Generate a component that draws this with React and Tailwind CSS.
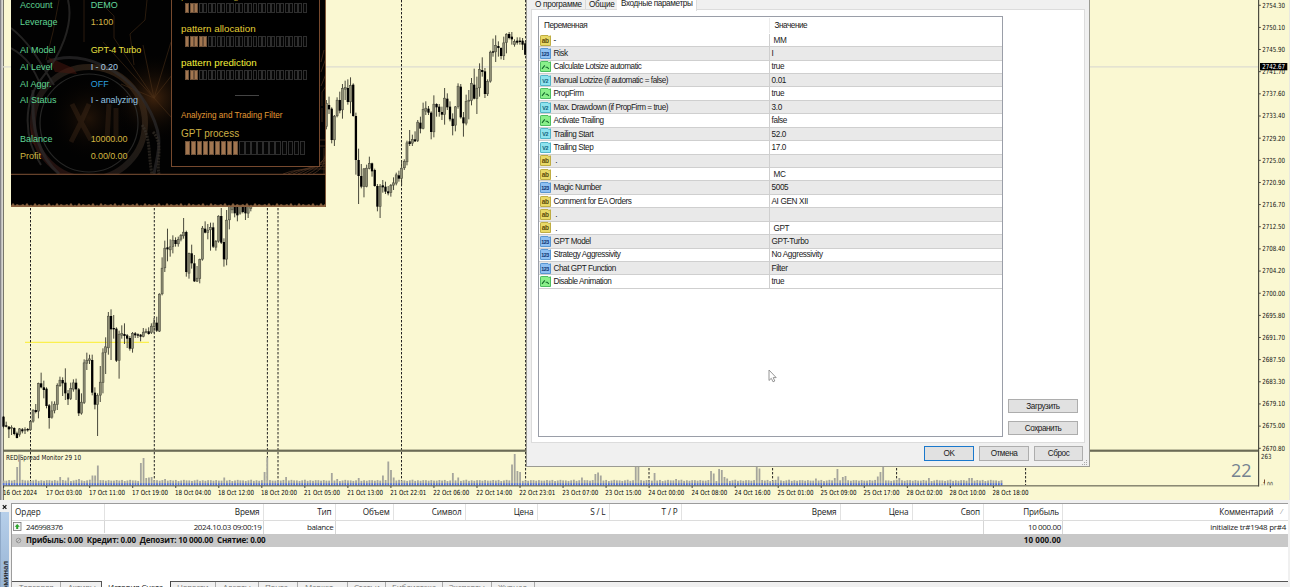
import React from "react";

/* Candles: high, low, body top, body bottom, direction (1 = up). Units are thirds of a pixel. */
const MORNING = [
  [648,685,650,680,0],[665,682,676,680,0],[678,714,680,688,0],[676,705,682,686,1],[682,706,684,702,0],[695,715,700,714,0],
  [684,710,686,704,1],[684,700,688,694,0],[682,702,688,692,1],[684,695,687,691,0],[662,692,664,690,1],[628,668,630,664,1],
  [612,640,630,636,0],[548,655,550,634,1],[518,565,550,562,0],[542,595,562,570,0],[562,625,566,618,0],[612,686,616,654,0],
  [604,656,632,652,1],[604,640,612,632,1],[550,630,556,614,1],[530,560,540,558,1],[532,588,540,550,0],[505,600,548,580,0],
  [570,615,580,598,0],[548,600,565,596,1],[538,575,548,568,1],[536,600,548,568,0],[564,648,568,640,0],[580,644,606,640,1],
  [478,612,488,608,1],[458,510,480,490,1],[464,492,476,482,1],[464,586,480,578,0],[562,628,578,614,0],[580,708,586,614,1],
  [498,606,546,586,1],[445,580,458,548,1],[412,522,440,458,1],[336,464,348,444,1],[328,480,348,388,0],[345,416,384,388,0],
  [382,486,386,482,0],[392,536,402,482,1],[376,416,400,406,1],[370,432,402,408,0],[402,444,406,416,0],[408,452,414,446,0],
  [396,458,400,446,1],[396,414,400,406,0],[400,414,403,407,0],[402,424,404,410,0],[384,412,396,410,1],[386,400,394,398,1],
  [382,404,394,402,0],[370,402,378,398,1],[354,400,368,380,1],[350,396,368,392,0],[280,396,282,394,1],[172,286,204,282,1],
  [122,216,144,204,1],[86,184,142,148,0],[118,170,140,150,1],[106,160,120,140,1],[112,140,120,132,0],[110,140,118,132,1],
  [102,124,106,118,1],[54,116,96,108,1],[92,230,96,216,0],[158,236,160,220,1],[134,206,160,190,0],[165,246,190,244,0],
  [198,246,234,244,1],[176,250,178,236,1],[78,182,84,178,1],[64,100,86,98,0],[72,118,90,98,1],[68,152,82,90,1],
  [68,144,82,140,0],[120,152,124,142,1],[46,128,48,124,1],[24,132,48,128,0],[115,200,126,178,0],[30,196,60,178,1],
  [10,88,10,60,1],[10,40,10,30,1],[10,52,10,40,0],[10,64,10,46,0],[10,44,10,40,1],[10,40,10,36,0],[10,60,10,40,0],
  [10,54,10,40,1],[10,34,10,26,1],
];
const EVENING = [
  [300,388,310,380,1],[290,342,315,328,0],[322,430,326,420,0],[345,438,348,420,1],[292,352,300,348,1],[275,340,300,332,0],
  [252,356,265,330,1],[242,300,262,268,1],[238,314,264,306,0],[232,340,256,306,1],[250,350,254,348,0],[338,524,348,480,0],
  [446,612,480,528,0],[492,565,528,560,0],[504,592,506,560,1],[494,562,504,560,1],[470,508,490,506,1],[488,530,490,514,0],
  [506,560,510,558,0],[552,634,558,620,0],[552,654,558,620,1],[540,578,556,562,0],[545,582,560,575,0],[558,586,574,580,0],
  [552,590,556,578,1],[532,570,548,556,1],[518,556,524,550,1],[512,545,526,536,0],[480,556,504,536,1],[478,510,484,504,1],
  [422,496,428,486,1],[390,438,424,432,0],[404,438,418,430,1],[394,426,418,424,0],[360,426,366,422,1],[350,400,368,386,0],
  [308,388,328,386,1],[304,345,324,334,1],[318,345,326,338,0],[334,418,338,396,0],[286,412,312,396,1],[310,350,312,322,0],
  [312,350,320,336,0],[320,360,336,344,0],[264,374,294,344,1],[280,330,296,322,0],[304,364,320,358,0],[340,406,356,378,0],
  [318,394,320,376,1],[250,326,258,320,1],[252,356,260,352,0],[336,410,352,370,0],[284,376,304,370,1],[270,358,300,304,1],
  [234,316,250,302,1],[206,298,254,296,0],[230,342,264,296,1],[190,290,208,264,1],[172,230,210,216,0],[204,294,214,282,0],
  [238,288,244,282,1],[152,248,156,244,1],[116,170,154,158,0],[106,186,136,156,1],[124,170,138,144,0],[142,178,144,168,0],
  [110,180,128,168,1],[100,160,102,128,1],[96,118,102,114,0],[96,134,110,118,0],[118,140,124,134,1],[112,134,122,128,0],
  [112,134,122,126,0],[114,150,122,134,0],[124,166,130,164,0],
];

/* Spread spikes: bar index -> top y */
const SPIKES = {
  5: 467, 6: 454.5, 21: 477, 24: 477.5, 28: 479, 33: 475.5, 34: 475.5, 35: 465.5, 51: 463, 52: 458, 53: 478, 54: 477.5, 55: 477,
  60: 479, 82: 477.5, 97: 472, 98: 457.5, 105: 477, 122: 473, 124: 479, 132: 478, 141: 475.5, 143: 461.5, 144: 470, 145: 477.5, 167: 473, 169: 477.5,
  189: 464.5, 190: 454, 191: 471, 192: 472, 215: 477.5, 220: 474, 221: 472.5, 222: 475.5, 235: 460, 236: 460, 242: 473, 250: 479,
  263: 471, 264: 473.5, 266: 469, 267: 470, 268: 477, 269: 478.5, 280: 466, 281: 468.5, 288: 476.5, 302: 478.5, 309: 478, 310: 469, 312: 477, 313: 476,
  325: 476.5, 326: 472, 327: 466, 333: 478, 344: 478, 359: 478, 360: 478,
};
const TIMES = ["16 Oct 2024","17 Oct 03:00","17 Oct 11:00","17 Oct 19:00","18 Oct 04:00","18 Oct 12:00","18 Oct 20:00","21 Oct 05:00","21 Oct 13:00","21 Oct 22:01","22 Oct 06:00","22 Oct 14:00","22 Oct 23:01","23 Oct 07:00","23 Oct 15:00","24 Oct 00:00","24 Oct 08:00","24 Oct 16:00","25 Oct 01:00","25 Oct 09:00","25 Oct 17:00","28 Oct 02:00","28 Oct 10:00","28 Oct 18:00"];
const PRICES = ["2754.30","2750.10","2745.90","2741.70","2737.60","2733.40","2729.20","2725.00","2720.90","2716.70","2712.50","2708.40","2704.20","2700.00","2695.80","2691.70","2687.50","2683.30","2679.10","2675.00","2670.80"];

const PARAMS = [
  ["ab", "-", "\u00a0MM"], ["int", "Risk", "I"], ["bool", "Calculate Lotsize automatic", "true"],
  ["dbl", "Manual Lotzize (if automatic = false)", "0.01"], ["bool", "PropFirm", "true"],
  ["dbl", "Max. Drawdown (if PropFirm = true)", "3.0"], ["bool", "Activate Trailing", "false"],
  ["dbl", "Trailing Start", "52.0"], ["dbl", "Trailing Step", "17.0"], ["ab", "\u00a0.", ""], ["ab", "\u00a0.", "\u00a0MC"],
  ["int", "Magic Number", "5005"], ["ab", "Comment for EA Orders", "AI GEN XII"], ["ab", "\u00a0.", ""], ["ab", "\u00a0.", "\u00a0GPT"],
  ["int", "GPT Model", "GPT-Turbo"], ["int", "Strategy Aggressivity", "No Aggressivity"],
  ["int", "Chat GPT Function", "Filter"], ["bool", "Disable Animation", "true"],
];

function Candles({ data, x0, y0 }) {
  return data.map(([h, l, t, b, up], i) => {
    const x = (x0 + i * 8.065) / 3;
    const top = (y0 + t) / 3;
    const hgt = Math.max((b - t) / 3, 1);
    return (
      <g key={i}>
        <line x1={x} x2={x} y1={(y0 + h) / 3} y2={(y0 + l) / 3} stroke="#34342a" strokeWidth="0.9" />
        {up ? (
          <rect x={x - 1} y={top + 0.2} width="2" height={Math.max(hgt - 0.4, 0.6)} fill="#8f8f76" stroke="#4c4c3e" strokeWidth="0.6" />
        ) : (
          <rect x={x - 1.15} y={top} width="2.3" height={hgt} fill="#000" />
        )}
      </g>
    );
  });
}

function Chart() {
  const bars = Array.from({ length: 372 }, (_, i) => i);
  return (
    <svg width="1290" height="500" className="block" fontFamily="'DejaVu Sans Condensed','DejaVu Sans',sans-serif">
      <rect width="1290" height="500" fill="#faf8d2" />
      <rect width="3" height="500" fill="#d6d6d0" />
      <rect width="1.3" height="500" fill="#85858a" />
      <rect x="3" width="1" height="500" fill="#77776a" />
      <line x1="3" x2="1258" y1="66.8" y2="66.8" stroke="#dcdcd0" strokeWidth="1.2" />
      <line x1="25" x2="149" y1="342.3" y2="342.3" stroke="#fbf04e" strokeWidth="1.2" />
      <g stroke="#222" strokeWidth="1" strokeDasharray="2.4 1.6">
        {[30.5, 154.3, 267.4, 278, 401.5, 525.6, 649, 772.6, 896.6, 1025.6].map((x) => (
          <line key={x} x1={x} x2={x} y1="0" y2="485" />
        ))}
      </g>
      <Candles data={MORNING} x0={10.5} y0={600} />
      <Candles data={EVENING} x0={979} y0={0} />

      <rect x="3" y="449.6" width="1256" height="2.2" fill="#6b6b56" />
      <text x="6" y="460.2" fontSize="7" textLength="75" lengthAdjust="spacingAndGlyphs" fill="#111">RED|Spread Monitor 29 10</text>
      {bars.map((i) => {
        const x = 3.7 + i * 2.6895;
        const top = SPIKES[i] ?? 480.6 - ((i * 7) % 5) * 0.22 + ((i * 3) % 4) * 0.15;
        return (
          <g key={i}>
            <rect x={x - 0.9} y={top} width="1.8" height={483.6 - top} fill="#a5a59c" />
            <rect x={x - 0.9} y="483.2" width="1.8" height="2.3" fill="#4a6be0" />
          </g>
        );
      })}
      <rect x="3" y="485.3" width="1256" height="1.1" fill="#5c5c4c" />
      <rect x="1258" y="0" width="1.2" height="486.4" fill="#4c4c40" />
      {TIMES.map((t, i) => (
        <g key={t}>
          <rect x={3.2 + i * 43.03} y="486" width="0.9" height="2" fill="#333" />
          <text x={2.9 + i * 43.03} y="494.5" fontSize="7" textLength={i ? 36 : 34} lengthAdjust="spacingAndGlyphs" fill="#000">{t}</text>
        </g>
      ))}
      {PRICES.map((p, i) => (
        <g key={p}>
          <rect x="1259" y={4.8 + i * 22.15} width="1.8" height="0.9" fill="#333" />
          <text x="1262.3" y={7.6 + i * 22.15} fontSize="7" textLength="22.8" lengthAdjust="spacingAndGlyphs" fill="#111">{p}</text>
        </g>
      ))}
      <rect x="1260" y="63" width="27.3" height="7.3" fill="#000" />
      <text x="1262.3" y="69.3" fontSize="7" textLength="22.8" lengthAdjust="spacingAndGlyphs" fill="#fff">2742.67</text>
      <text x="1261" y="459" fontSize="7" textLength="10.5" lengthAdjust="spacingAndGlyphs" fill="#222">263</text>
      <svg x="1259" y="476" width="30" height="9.2">
        <text x="2" y="10.5" fontSize="7" textLength="12" lengthAdjust="spacingAndGlyphs" fill="#333">-1.00</text>
        <path d="M5.5 3.5V7.5" stroke="#7a4a30" strokeWidth="1" />
      </svg>
      <text x="1231" y="476.5" fontSize="19" fontFamily="'Open Sans','Noto Sans',sans-serif" textLength="20.5" lengthAdjust="spacingAndGlyphs" fill="#748290">22</text>
      <rect x="1289" width="1" height="500" fill="#e8e8e0" />
    </svg>
  );
}

function Meter({ total, filled, big }) {
  return (
    <div className={big ? "ml-[3.5px] flex h-[14px] w-[120.5px] gap-[0.6px]" : "ml-1 flex h-[10.5px] w-[122px] gap-[0.5px]"}>
      {Array.from({ length: total }, (_, i) => (
        <div key={i} className={i < filled ? "flex-1 border border-[#6f523a] bg-[#a27650]" : "flex-1 border border-[#2e2e2e] bg-[#050505]"} />
      ))}
    </div>
  );
}

function InfoRow({ label, value, tone, labelTone = "text-[#5fd693]" }) {
  return (
    <div className="flex h-[16.8px] items-center">
      <span className={`w-[70.7px] ${labelTone}`}>{label}</span>
      <span className={tone}>{value}</span>
    </div>
  );
}

function PanelArt() {
  return (
    <svg width="315" height="207" className="absolute left-0 top-0">
      <defs>
        <radialGradient id="glow"><stop offset="0" stopColor="#5e3413" stopOpacity=".65" /><stop offset="1" stopColor="#000" stopOpacity="0" /></radialGradient>
        <linearGradient id="ring" x1="0" y1="1" x2="1" y2="0"><stop offset="0" stopColor="#3a1512" /><stop offset=".5" stopColor="#2b2622" /><stop offset="1" stopColor="#4b3018" /></linearGradient>
      </defs>
      <rect width="315" height="207" fill="#020202" />
      <ellipse cx="78" cy="118" rx="42" ry="44" fill="url(#glow)" opacity=".5" />
      <circle cx="143" cy="98" r="46" fill="url(#glow)" />
      <g stroke="#50331a" strokeWidth=".7" opacity=".75" fill="none">
        <path d="M143 98L160 42M143 98L132 45M143 98L112 52M143 98L92 42M143 98L161 75M143 98L161 118M143 98L110 84" />
        <path d="M94 0V7L103 16V38L111 50M136 0L134 20L119 34L123 65M73 42V0M48 0L42 32L35 60" />
      </g>
      <circle cx="78" cy="123" r="56" fill="none" stroke="url(#ring)" strokeWidth="6" opacity=".65" />
      <circle cx="78" cy="123" r="49" fill="none" stroke="#30302e" strokeWidth="1.2" opacity=".8" />
      <path d="M36 62C70 48 115 70 135 104S147 150 143 174M22 90C20 130 28 156 48 174" fill="none" stroke="#2c2b2c" strokeWidth="3" opacity=".7" />
      <path d="M37 57L62 68L66 74L44 72ZM19 123L25 146L21 143Z" fill="#46150f" opacity=".55" />
      <path d="M61 104L70 122L60 142M78 104L70 122L80 140M98 104L96 140M105 108V142" fill="none" stroke="#51351f" strokeWidth="5" opacity=".32" />
      <path d="M0 28C18 42 28 60 43 85M0 48C16 57 22 67 31 88M57 0C63 24 50 55 31 78S12 138 30 165" fill="none" stroke="#2c2a29" strokeWidth="2" opacity=".8" />
      <path d="M142 132C153 144 145 160 148 174M131 125C140 138 137 155 141 174" fill="none" stroke="#36302a" strokeWidth="3" strokeDasharray="2 1" opacity=".7" />
      <g fill="none" stroke="#49301f" strokeWidth=".8">
        <path d="M310 62L313 50M310 72L315 58M310 86L315 74M311 106V92L315 86M311 122V108M308 140H315M308 146H315M313 148V174" />
        {[0, 1, 2, 3, 4, 5, 6].map((i) => <path key={i} d={`M${272 + i * 5} 174Q${285 + i * 5} 168 315 ${169 - i * 3}`} />)}
      </g>
      <rect y="174.5" width="315" height="32.5" fill="#000" />
      <path d="M0 174.3H315" stroke="#805336" strokeWidth="1" />
      <path d={"M0 206" + Array.from({ length: 158 }, (_, i) => `L${i * 2} ${206 - ((i * i * 7 + i * 3) % 11) / 3.6}`).join("") + "V207H0Z"} fill="#8b6442" stroke="#8b6442" strokeWidth=".4" />
      <path d="M0 206.3H315M314.6 0V206" stroke="#8b603f" strokeWidth="1" />
    </svg>
  );
}

function TradePanel() {
  return (
    <section className="absolute left-[10.5px] top-0 h-[207px] w-[315px] overflow-hidden bg-black font-['Liberation_Sans',Arial,sans-serif] text-[9px]">
      <PanelArt />
      <div className="relative flex">
        <div className="w-[160px] pl-[9.5px]">
          <div className="-mt-[2.5px]">
            <InfoRow label="Account" value="DEMO" tone="text-[#63d59a]" />
            <InfoRow label="Leverage" value="1:100" tone="text-[#d6b548]" />
          </div>
          <div className="mt-[11.3px]">
            <InfoRow label="AI Model" value="GPT-4 Turbo" tone="text-[#e9e040] -tracking-[0.1px]" />
            <InfoRow label="AI Level" value="I - 0.20" tone="text-[#a6cbe0] -tracking-[0.1px]" />
            <InfoRow label="AI Aggr." value="OFF" tone="text-[#2c9ede]" />
            <InfoRow label="AI Status" value="I - analyzing" tone="text-[#94c5e4] -tracking-[0.1px]" />
          </div>
          <div className="mt-[22px]">
            <InfoRow label="Balance" value="10000.00" tone="text-[#d2b640] -tracking-[0.1px]" />
            <InfoRow label="Profit" value="0.00/0.00" tone="text-[#d2b640] -tracking-[0.1px]" labelTone="text-[#d2b640]" />
          </div>
        </div>
        <div className="h-[167px] w-[149px] overflow-hidden border border-t-0 border-[#76492e] bg-black pl-[9.5px] text-[9.8px] leading-[12px] text-[#e3cf35]">
          <div className="-mt-[9.8px] text-[#a99a2a]">pattern recognition</div>
          <div className="mt-[0.3px]"><Meter total={27} filled={3} /></div>
          <div className="mt-[10.1px]">pattern allocation</div>
          <div className="mt-[1px]"><Meter total={27} filled={5} /></div>
          <div className="mt-[10.1px] text-[#f4f03c]">pattern prediction</div>
          <div className="mt-[1px]"><Meter total={27} filled={3} /></div>
          <div className="ml-[54px] mt-[15px] h-px w-6 bg-[#444]" />
          <div className="mt-[13.5px] text-[8.2px] text-[#e39a35]">Analyzing and Trading Filter</div>
          <div className="mt-[6.3px] text-[10px] text-[#cdb045]">GPT process</div>
          <div className="mt-px"><Meter total={20} filled={9} big /></div>
        </div>
      </div>
    </section>
  );
}

function TypeIcon({ kind }) {
  const c = { ab: ["#e9d968", "#b9a637", "#5c4d0c"], int: ["#8fc0f2", "#4d8fce", "#0d3270"], bool: ["#8af08a", "#42b656", "#14682c"], dbl: ["#8fe3ee", "#46afc4", "#10607a"] }[kind];
  return (
    <svg width="11" height="11" viewBox="0 0 11 11" className="shrink-0">
      <path d="M.5 1.2Q.5.5 1.2.5H8L8.8 1.6L10.5 .8V10.5H.8Q.5 10.5 .5 10Z" fill={c[0]} stroke={c[1]} strokeWidth=".9" />
      {kind === "bool" ? (
        <path d="M2 7.8L4.8 4.4M5.6 6.2H7.2L8.8 7.8" stroke={c[2]} strokeWidth="1.1" fill="none" />
      ) : (
        <text x="5.1" y="7.9" textAnchor="middle" fontSize={kind === "ab" ? 6.5 : 5.4} fontWeight="bold" fontFamily="'Liberation Sans',sans-serif" fill={c[2]}>
          {kind === "ab" ? "ab" : kind === "int" ? "123" : "V2"}
        </text>
      )}
    </svg>
  );
}

function Button({ children, className = "" }) {
  return <button className={`flex items-center justify-center border bg-[#e1e1e1] ${className}`}>{children}</button>;
}

function Dialog() {
  return (
    <section className="absolute left-[526px] top-0 flex h-[467px] w-[564px] flex-col border border-t-0 border-[#9b9b93] bg-[#f0f0f0] font-['Liberation_Sans',Arial,sans-serif] text-[8.2px] leading-[10px] tracking-[-0.45px] text-[#1a1a1a]">
      <nav className="ml-1 flex h-[9px] shrink-0 overflow-visible whitespace-nowrap">
        <div className="h-[9px] w-[55px] border-r border-[#d9d9d9] pl-[4px] tracking-[-0.3px]">О программе</div>
        <div className="h-[9px] w-[31px] pl-[3px] tracking-[-0.3px]">Общие</div>
        <div className="z-10 h-[10.5px] w-[80px] border-r border-[#dcdcdc] bg-white pl-[4px] tracking-[-0.38px]"><div className="-mt-px">Входные параметры</div></div>
      </nav>
      <div className="ml-1 flex h-[434px] w-[554px] shrink-0 border border-[#dcdcdc] bg-white pl-[6px] pt-[6px]">
        <div className="flex h-[421px] w-[465px] flex-col border border-[#9a9ea8]">
          <div className="flex h-[16.8px] shrink-0 items-center pt-px">
            <span className="w-[230.5px] border-r border-[#ececec] pl-[5px] leading-[15px]">Переменная</span>
            <span className="pl-[5px]">Значение</span>
          </div>
          {PARAMS.map(([kind, name, value], i) => (
            <div key={i} className={`flex h-[13.43px] shrink-0 items-center border-b border-[#cfcfcf] ${i % 2 ? "bg-[#e9e9e9]" : "bg-white"}`}>
              <div className="flex h-full w-[230.5px] items-center gap-[3px] border-r border-[#cfcfcf] pl-[0.5px]">
                <TypeIcon kind={kind} />
                <span className="pt-[1.2px]">{name}</span>
              </div>
              <span className="pl-[2px] pt-[1.2px] tracking-[-0.35px]">{value}</span>
            </div>
          ))}
        </div>
        <div className="ml-[5px] mt-[383px] flex flex-col gap-[8px]">
          <Button className="h-[14px] w-[70px] border-[#adadad] pt-px">Загрузить</Button>
          <Button className="h-[14px] w-[70px] border-[#adadad] pt-px">Сохранить</Button>
        </div>
      </div>
      <div className="mr-[6px] mt-[3px] flex justify-end gap-[5px]">
        <Button className="h-[15px] w-[50px] border-[1.6px] border-[#1a78cc]">OK</Button>
        <Button className="h-[15px] w-[50px] border-[#adadad]">Отмена</Button>
        <Button className="h-[15px] w-[49px] border-[#adadad]">Сброс</Button>
      </div>
      <svg width="6" height="6" className="absolute bottom-0 right-px" fill="#aaa">
        <path d="M4 0h1v1h-1zM4 2h1v1h-1zM4 4h1v1h-1zM2 2h1v1h-1zM2 4h1v1h-1zM0 4h1v1h-1z" />
      </svg>
    </section>
  );
}

const COLS = "grid grid-cols-[92.5px_159px_72px_58px_72px_72px_72px_72px_159px_72px_71.5px_79px_225px]";
const HEADS = ["", "Время", "Тип", "Объем", "Символ", "Цена", "S / L", "T / P", "Время", "Цена", "Своп", "Прибыль"];
const CELLS = ["", "2024.10.03 09:00:19", "balance", "", "", "", "", "", "", "", "", "10 000.00"];
const RULED = [0, 1, 2, 10, 11];

function Tab({ children, className }) {
  return <div className={`relative h-[6px] shrink-0 whitespace-nowrap leading-[7px] ${className}`}>{children}</div>;
}

function Terminal() {
  return (
    <section className="flex h-[87px] bg-[#f0f0f0] font-['Open_Sans','Noto_Sans',sans-serif] text-[8px] tracking-[-0.1px] text-[#1a1a1a]">
      <aside className="flex w-[11px] shrink-0 flex-col pt-1">
        <svg width="10" height="7" className="shrink-0"><path d="M2.8 1.2L6.4 4.8M6.4 1.2L2.8 4.8" stroke="#111" strokeWidth="1.2" /></svg>
        <div className="mt-[1px] flex h-[76px] w-[9px] justify-center overflow-hidden border-l border-[#8fa9c8] bg-linear-to-b from-[#b6cfea] to-[#98b4d4] pt-[49px]">
          <span className="h-[38px] text-right font-semibold leading-[8px] tracking-normal [writing-mode:vertical-rl] rotate-180 text-[7.5px]">Терминал</span>
        </div>
      </aside>
      <div className="mt-[3px] flex w-[1277px] shrink-0 flex-col border-l border-t border-[#9c9c9c] bg-white">
        <div className={`${COLS} h-[16.5px] shrink-0 border-b border-[#dcdcdc] text-[8.2px] leading-[15.5px] tracking-[-0.15px]`}>
          <div className="border-r border-[#e2e2e2] pl-[3px] tracking-normal">Ордер</div>
          {HEADS.slice(1).map((h, i) => <div key={i} className="border-r border-[#e2e2e2] pr-[3px] text-right">{h}</div>)}
          <div className="flex justify-end gap-2 pr-[6px]"><span>Комментарий</span><span className="text-[7px] text-[#888]">⁄</span></div>
        </div>
        <div className={`${COLS} h-[13px] shrink-0 leading-[11px] tracking-[-0.35px]`}>
          <div className="flex h-[12px] items-center border-r border-[#d6d6d6] pl-[0.5px]">
            <svg width="9" height="9"><rect x=".5" y=".5" width="7.5" height="8" fill="#f4f4f4" stroke="#777" strokeWidth=".8" /><path d="M4.2 2L6.8 4.7H5.2V7H3.2V4.7H1.7Z" fill="#2aa32a" /></svg>
            <span className="ml-[4.5px] tracking-[-0.5px]">246998376</span>
          </div>
          {CELLS.slice(1).map((c, i) => <div key={i} className={`pr-px text-right ${RULED.includes(i + 1) ? "border-r border-[#d6d6d6]" : ""}`}>{c}</div>)}
          <div className="pr-[2px] text-right tracking-[-0.28px]">initialize tr#1948 pr#4</div>
        </div>
        <div className={`${COLS} h-[13.5px] shrink-0 bg-[#c8c8c8] font-bold leading-[12.5px] text-[#111]`}>
          <div className="col-span-11 flex items-center pl-[2.5px]">
            <svg width="7" height="7"><circle cx="3.5" cy="3.5" r="2.3" fill="none" stroke="#8a8a8a" strokeWidth=".8" /><path d="M2 5L5 2" stroke="#8a8a8a" strokeWidth=".7" /></svg>
            <span className="ml-[4.5px] whitespace-pre tracking-[-0.16px]">Прибыль: 0.00  Кредит: 0.00  Депозит: 10 000.00  Снятие: 0.00</span>
          </div>
          <div className="pr-[2px] text-right tracking-[0.1px]">10 000.00</div>
        </div>
        <div className="h-[33.5px] shrink-0" />
        <div className="flex h-[7px] shrink-0 border-t border-[#555] bg-[#f0f0f0] tracking-[-0.2px] text-[#777]">
          <Tab className="w-[49px] border-r border-[#aaa] pl-[7px] pt-[1px]">Торговля</Tab>
          <Tab className="w-[41px] border-r border-[#555] pl-[7px] pt-[1px]">Активы</Tab>
          <Tab className="-top-px w-[69px] border-r border-[#444] bg-white pl-[6px] pt-[2px] text-[#111]">История Счета</Tab>
          <Tab className="w-[45px] border-r border-[#aaa] pl-[6px] pt-[1px]">Новости</Tab>
          <Tab className="w-[43px] border-r border-[#aaa] pl-[7px] pt-[1px]">Алерты</Tab>
          <Tab className="w-[39px] border-r border-[#aaa] pl-[6px] pt-[1px]">Почта</Tab>
          <Tab className="w-[50px] border-r border-[#aaa] pl-[7px] pt-[1px]">Маркет</Tab>
          <Tab className="w-[38px] border-r border-[#aaa] pl-[6px] pt-[1px]">Статьи</Tab>
          <Tab className="w-[57px] border-r border-[#aaa] pl-[6px] pt-[1px]">Библиотека</Tab>
          <Tab className="w-[49px] border-r border-[#aaa] pl-[6px] pt-[1px]">Эксперты</Tab>
          <Tab className="w-[43px] border-r border-[#aaa] pl-[6px] pt-[1px]">Журнал</Tab>
        </div>
      </div>
    </section>
  );
}

export default function App() {
  return (
    <main className="relative flex h-[587px] w-[1290px] flex-col overflow-hidden bg-[#f0f0f0]">
      <Chart />
      <TradePanel />
      <Dialog />
      <Terminal />
      <svg width="9" height="14" viewBox="0 0 9 14" className="absolute left-[768px] top-[369px]">
        <path d="M1 1V11.5L3.3 9.3L5 12.8L6.8 12L5.2 8.6H8.2Z" fill="#fff" stroke="#8a8a8a" strokeWidth=".9" />
      </svg>
    </main>
  );
}
